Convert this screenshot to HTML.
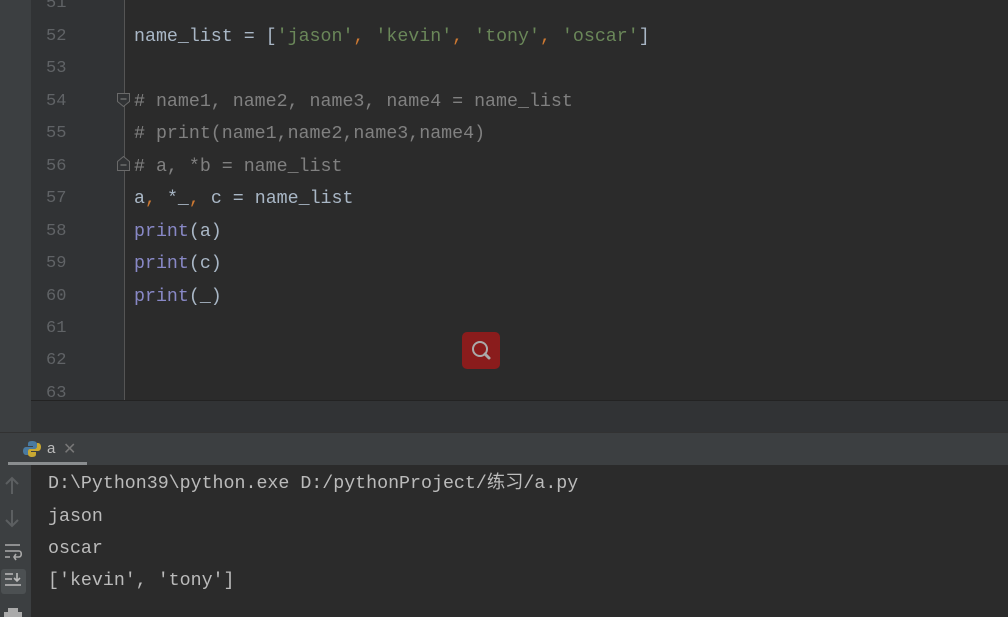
<!DOCTYPE html>
<html><head><style>
*{margin:0;padding:0;box-sizing:border-box}
body{width:1008px;height:617px;overflow:hidden;background:#2b2b2b;position:relative;font-family:"Liberation Mono","Noto Sans CJK SC",monospace;}
.abs{position:absolute}
.ln{position:absolute;left:46px;width:24px;text-align:left;color:#606366;font-size:17px;line-height:22px}
.code{position:absolute;left:134px;color:#a9b7c6;font-size:18.3px;white-space:pre;line-height:22px}
.s{color:#6a8759}.o{color:#cc7832}.c{color:#808080}.p{color:#8888c6}
.out{position:absolute;left:48px;color:#bbbbbb;font-size:18.3px;white-space:pre;line-height:22px;height:22px}
</style></head><body>
<div class="abs" style="left:0;top:0;width:31px;height:432px;background:#3c3f41"></div>
<div class="abs" style="left:31px;top:0;width:94px;height:400px;background:#313335"></div>
<div class="abs" style="left:124px;top:0;width:1px;height:400px;background:#555"></div>
<div class="abs" style="left:31px;top:400px;width:977px;height:1px;background:#232323"></div>
<div class="abs" style="left:31px;top:401px;width:977px;height:31px;background:#313335"></div>
<div class="abs" style="left:0;top:432px;width:1008px;height:33px;background:#3c3f41;border-top:1px solid #323232"></div>
<div class="abs" style="left:8px;top:462px;width:79px;height:3px;background:#8a8d8f"></div>
<div class="abs" style="left:0;top:465px;width:31px;height:152px;background:#3c3f41"></div>

<div class="ln" style="top:-7px">51</div>
<div class="ln" style="top:26px">52</div>
<div class="ln" style="top:58px">53</div>
<div class="ln" style="top:91px">54</div>
<div class="ln" style="top:123px">55</div>
<div class="ln" style="top:156px">56</div>
<div class="ln" style="top:188px">57</div>
<div class="ln" style="top:221px">58</div>
<div class="ln" style="top:253px">59</div>
<div class="ln" style="top:286px">60</div>
<div class="ln" style="top:318px">61</div>
<div class="ln" style="top:350px">62</div>
<div class="ln" style="top:383px">63</div>

<svg class="abs" style="left:116px;top:92px" width="16" height="80"><path d="M1.5 1.5h12v8l-6 5-6-5z" fill="#313335" stroke="#6a6a6a"/><path d="M4.5 7h6" stroke="#888"/><path d="M1.5 78.5h12v-9l-6-5-6 5z" fill="#313335" stroke="#6a6a6a"/><path d="M4.5 73h6" stroke="#888"/></svg>

<div class="code" style="top:26px">name_list = [<span class="s">'jason'</span><span class="o">, </span><span class="s">'kevin'</span><span class="o">, </span><span class="s">'tony'</span><span class="o">, </span><span class="s">'oscar'</span>]</div>
<div class="code c" style="top:91px"># name1, name2, name3, name4 = name_list</div>
<div class="code c" style="top:123px"># print(name1,name2,name3,name4)</div>
<div class="code c" style="top:156px"># a, *b = name_list</div>
<div class="code" style="top:188px">a<span class="o">, </span>*_<span class="o">, </span>c = name_list</div>
<div class="code" style="top:221px"><span class="p">print</span>(a)</div>
<div class="code" style="top:253px"><span class="p">print</span>(c)</div>
<div class="code" style="top:286px"><span class="p">print</span>(_)</div>

<div class="abs" style="left:462px;top:332px;width:38px;height:37px;background:#8a1c1c;border-radius:5px"></div>
<svg class="abs" style="left:462px;top:332px" width="38" height="37"><circle cx="18" cy="17" r="7" fill="none" stroke="#aaa" stroke-width="2"/><path d="M23 22l4 4" stroke="#aaa" stroke-width="3" stroke-linecap="round"/></svg>

<svg class="abs" style="left:23px;top:440px" width="18" height="18"><path d="M9 1c-4 0-4 2-4 3v2h5v1H3c-2 0-3 2-3 4s1 4 3 4h2v-3c0-2 1-3 3-3h4c1 0 2-1 2-2V4c0-2-2-3-5-3z" fill="#4a7aa0"/><path d="M9 17c4 0 4-2 4-3v-2H8v-1h7c2 0 3-2 3-4s-1-4-3-4h-1v3c0 2-1 3-3 3H7c-1 0-2 1-2 2v3c0 2 2 3 4 3z" fill="#c8a832"/></svg>
<div class="abs" style="left:47px;top:440px;color:#bbb;font-family:'Liberation Sans',sans-serif;font-size:15px">a</div>
<div class="abs" style="left:63px;top:439px;color:#777;font-family:'Liberation Sans',sans-serif;font-size:16px">✕</div>

<svg class="abs" style="left:0;top:470px" width="31" height="147" stroke="#5c5f61" stroke-width="2" fill="none"><path d="M12 24V8M6 14l6-6 6 6"/><path d="M12 40v16M6 50l6 6 6-6"/><g stroke="#aaa" stroke-width="1.6"><path d="M5 75h15M5 81h14c3 0 3 6 0 6h-5M16 84l-2 3 2 3M5 87h5"/></g><rect x="1" y="99" width="25" height="25" rx="3" fill="#4c5052" stroke="none"/><g stroke="#bbb" stroke-width="1.6"><path d="M5 104h8M5 109h7M5 115h16M17 103v8M14 108l3 3 3-3"/></g><path d="M8 138h10v4H8z" fill="#aaa" stroke="none"/><path d="M4 142h18v6H4z" fill="#aaa" stroke="none"/></svg>

<div class="out" style="top:473px">D:\Python39\python.exe D:/pythonProject/练习/a.py</div>
<div class="out" style="top:506px">jason</div>
<div class="out" style="top:538px">oscar</div>
<div class="out" style="top:570px">['kevin', 'tony']</div>
</body></html>
